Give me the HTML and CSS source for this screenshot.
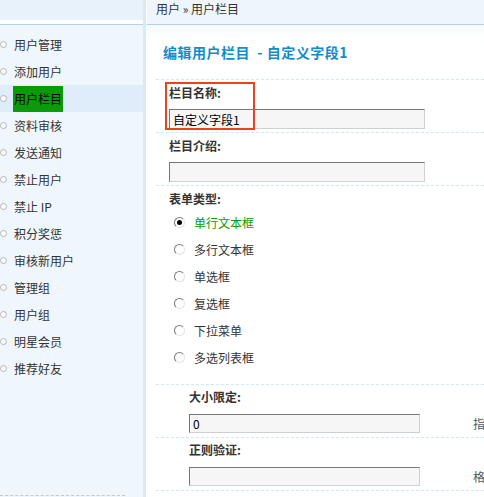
FILE: index.html
```html
<!DOCTYPE html>
<html lang="zh-CN">
<head>
    <meta charset="UTF-8">
    <title>编辑用户栏目</title>
    <link rel="stylesheet" href="styles.css">
</head>
<body>

<div class="layout">
    <!-- Left menu -->
    <div class="sidebar">
        <div class="side-head"></div>
        <ul class="menu">
            <li><span class="dot"></span><a href="#">用户管理</a></li>
            <li><span class="dot"></span><a href="#">添加用户</a></li>
            <li class="current"><span class="dot"></span><a href="#">用户栏目</a></li>
            <li><span class="dot"></span><a href="#">资料审核</a></li>
            <li><span class="dot"></span><a href="#">发送通知</a></li>
            <li><span class="dot"></span><a href="#">禁止用户</a></li>
            <li><span class="dot"></span><a href="#">禁止 IP</a></li>
            <li><span class="dot"></span><a href="#">积分奖惩</a></li>
            <li><span class="dot"></span><a href="#">审核新用户</a></li>
            <li><span class="dot"></span><a href="#">管理组</a></li>
            <li><span class="dot"></span><a href="#">用户组</a></li>
            <li><span class="dot"></span><a href="#">明星会员</a></li>
            <li><span class="dot"></span><a href="#">推荐好友</a></li>
        </ul>
        <div class="side-foot"></div>
    </div>

    <!-- Main area -->
    <div class="main">
        <div class="crumb">用户 &raquo; 用户栏目</div>

        <div class="content">
            <h2 class="title">编辑用户栏目 &nbsp;- 自定义字段1</h2>

            <div class="row">
                <div class="mark"></div>
                <div class="label">栏目名称:</div>
                <input class="text" type="text" value="自定义字段1">
            </div>

            <div class="row">
                <div class="label">栏目介绍:</div>
                <input class="text" type="text" value="">
            </div>

            <div class="row types">
                <div class="label">表单类型:</div>
                <div class="option checked"><span class="radio"></span>单行文本框</div>
                <div class="option"><span class="radio"></span>多行文本框</div>
                <div class="option"><span class="radio"></span>单选框</div>
                <div class="option"><span class="radio"></span>复选框</div>
                <div class="option"><span class="radio"></span>下拉菜单</div>
                <div class="option"><span class="radio"></span>多选列表框</div>
            </div>

            <div class="row sub">
                <div class="label">大小限定:</div>
                <div class="field">
                    <input class="text short" type="text" value="0">
                    <span class="hint">指定字节数</span>
                </div>
            </div>

            <div class="row sub">
                <div class="label">正则验证:</div>
                <div class="field">
                    <input class="text short" type="text" value="">
                    <span class="hint">格式规则</span>
                </div>
            </div>
        </div>
    </div>
</div>

</body>
</html>
```

FILE: styles.css
```css
body {
    margin: 0;
    padding: 0;
    font-family: "Noto Sans CJK SC", "Liberation Sans", sans-serif;
    font-size: 12px;
    color: #333;
    background-color: #fff;
    overflow: hidden;
}

.layout {
    display: flex;
    height: 497px;
}

/* Sidebar */
.sidebar {
    width: 143px;
    flex-shrink: 0;
    display: flex;
    flex-direction: column;
    background-color: #f0f7fc;
    border-right: 3px solid #d9e9f6;
}

.side-head {
    height: 20px;
    background-color: #e8f2fa;
    border-bottom: 4px solid #fbfdff;
    box-shadow: 0 1px 0 #b6d0e2;
    margin-bottom: 1px;
}

.menu {
    list-style: none;
    margin: 0;
    padding: 6px 0 0 0;
    flex: 1;
}

.menu li {
    display: flex;
    align-items: center;
    height: 27px;
}

.menu li.current {
    background-color: #deedf9;
}

.menu a {
    color: #333;
    text-decoration: none;
    line-height: 26px;
    padding: 0 1px;
}

.menu li.current a {
    background-color: #0a9a0a;
    color: #000;
}

.dot {
    width: 5px;
    height: 5px;
    border: 1px solid #b4b4b4;
    border-radius: 50%;
    margin: 0 6px 0 0;
    background-color: #fff;
}

.side-foot {
    width: 125px;
    height: 1px;
    border-top: 1px dashed #c8c8c8;
}

/* Main */
.main {
    flex: 1;
    min-width: 0;
    overflow: hidden;
}

.crumb {
    height: 24px;
    padding: 0 0 0 9px;
    line-height: 18px;
    background-color: #eef6fc;
    border-bottom: 1px solid #b6d0e2;
    border-left: 1px solid #fff;
}

.content {
    padding: 0 0 0 10px;
    background: linear-gradient(#f4f9fd, #fff 14px);
}

.title {
    margin: 0;
    padding: 17px 0 0 7px;
    height: 37px;
    font-size: 14px;
    line-height: 20px;
    letter-spacing: 0.5px;
    color: #128dcc;
    font-weight: bold;
    border-bottom: 1px dashed #d3e7f3;
    box-sizing: content-box;
}

.row {
    position: relative;
    padding: 3px 0 3px 13px;
    border-bottom: 1px dashed #d3e7f3;
}

.label {
    font-weight: bold;
    line-height: 20px;
    margin-bottom: 6px;
}

.text {
    display: block;
    flex-shrink: 0;
    width: 256px;
    height: 20px;
    padding: 0 3px;
    box-sizing: border-box;
    font-family: inherit;
    font-size: 12px;
    color: #000;
    background-color: #f6f6f6;
    border: 1px solid;
    border-color: #777 #d0d0d0 #d0d0d0 #777;
    outline: none;
}

/* red highlight around the name field */
.mark {
    position: absolute;
    left: 9px;
    top: 2px;
    width: 86px;
    height: 44px;
    border: 2px solid #e9441c;
}

.types {
    padding-bottom: 13px;
}

.types .label {
    margin-bottom: 0;
}

.option {
    display: flex;
    align-items: center;
    height: 27px;
    padding-left: 5px;
}

.option.checked {
    color: #079a07;
}

.radio {
    width: 9px;
    height: 9px;
    margin-right: 9px;
    border: 1px solid;
    border-color: #7a7a7a #e4e4e4 #e4e4e4 #7a7a7a;
    border-radius: 50%;
    background-color: #fff;
    position: relative;
}

.option.checked .radio::after {
    content: "";
    position: absolute;
    left: 2px;
    top: 2px;
    width: 5px;
    height: 5px;
    border-radius: 50%;
    background-color: #000;
}

.sub {
    padding: 2px 0 4px 33px;
}

.sub .label {
    margin-bottom: 7px;
}

.field {
    display: flex;
    align-items: center;
    white-space: nowrap;
}

.text.short {
    width: 231px;
    height: 19px;
}

.hint {
    margin-left: 53px;
    color: #555;
}
```
